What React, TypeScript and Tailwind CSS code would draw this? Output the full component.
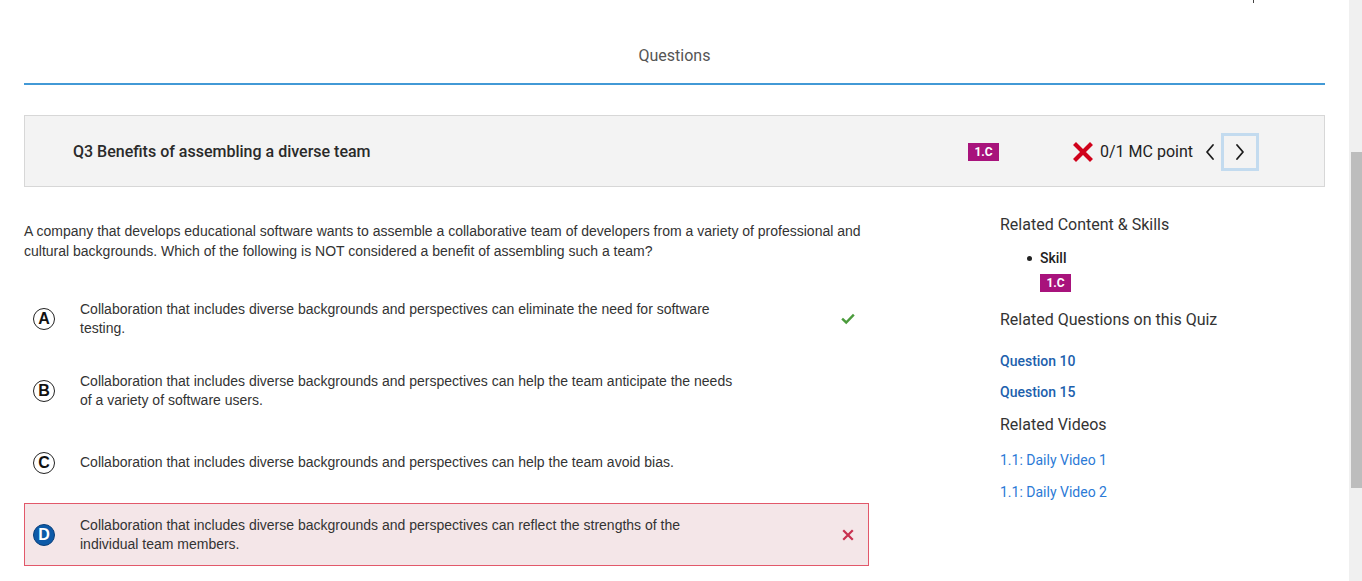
import React from 'react';

const options = [
  {
    letter: 'A',
    text: 'Collaboration that includes diverse backgrounds and perspectives can eliminate the need for software testing.',
    mark: 'correct',
  },
  {
    letter: 'B',
    text: 'Collaboration that includes diverse backgrounds and perspectives can help the team anticipate the needs of a variety of software users.',
    mark: null,
  },
  {
    letter: 'C',
    text: 'Collaboration that includes diverse backgrounds and perspectives can help the team avoid bias.',
    mark: null,
  },
  {
    letter: 'D',
    text: 'Collaboration that includes diverse backgrounds and perspectives can reflect the strengths of the individual team members.',
    mark: 'wrong',
  },
];

function SkillBadge() {
  return (
    <span className="inline-flex h-[18px] w-[31px] items-center justify-center bg-[#a8137c] text-[12px] font-bold leading-none text-white font-['Roboto',sans-serif]">
      1.C
    </span>
  );
}

function Chevron({ dir }: { dir: 'left' | 'right' }) {
  return (
    <svg width="12" height="18" viewBox="0 0 12 18" fill="none" stroke="#1b1b1b" strokeWidth="1.8" strokeLinecap="round" strokeLinejoin="round">
      {dir === 'left' ? <path d="M9 2 L3 9 L9 16" /> : <path d="M3 2 L9 9 L3 16" />}
    </svg>
  );
}

export default function App() {
  return (
    <div className="flex h-[581px] w-[1362px] overflow-hidden bg-white">
      <div className="flex-1 px-6">
        {/* cut-off text from above */}
        <div className="ml-[1229px] h-[3px] w-px bg-[#444]" />

        {/* Tab title */}
        <div className="pt-[43px] text-center font-['Roboto',sans-serif] text-[16px] leading-[20px] text-[#555]">
          Questions
        </div>
        <div className="mt-[17px] h-[2px] bg-[#4299d6]" />

        {/* Question header */}
        <div className="mt-[30px] flex h-[72px] items-center border border-[#d7d7d7] bg-[#f3f3f3] pl-12 pt-[2px] font-['Roboto',sans-serif]">
          <div className="text-[16px] font-medium text-[#2a2a2a]">Q3 Benefits of assembling a diverse team</div>
          <div className="ml-auto flex items-center">
            <SkillBadge />
            <svg className="ml-[74px]" width="20" height="20" viewBox="0 0 20 20" stroke="#d0021b" strokeWidth="4.2" strokeLinecap="square">
              <path d="M3 3 L17 17 M17 3 L3 17" />
            </svg>
            <span className="ml-[7px] text-[16px] text-[#222]">0/1 MC point</span>
            <span className="ml-[11px] flex items-center">
              <Chevron dir="left" />
            </span>
            <span className="ml-[5px] flex h-[38px] w-[38px] items-center justify-center border-[3px] border-[#c3dbef]">
              <Chevron dir="right" />
            </span>
          </div>
          <div className="w-[65px]" />
        </div>

        <div className="flex">
          {/* Left column */}
          <div className="w-[845px]">
            <p className="mt-[34px] font-['Liberation_Sans',Arial,sans-serif] text-[14px] leading-[20px] text-[#333]">
              A company that develops educational software wants to assemble a collaborative team of developers from a variety of professional and cultural backgrounds. Which of the following is NOT considered a benefit of assembling such a team?
            </p>
            <div className="mt-[26px] flex flex-col gap-[9px]">
              {options.map((o) => {
                const wrong = o.mark === 'wrong';
                return (
                  <div
                    key={o.letter}
                    className={
                      'flex h-[63px] items-center ' +
                      (wrong ? 'border border-[#e2586a] bg-[#f4e6e8]' : 'border border-transparent')
                    }
                  >
                    <span
                      className={
                        'ml-[8px] flex h-[22px] w-[22px] items-center justify-center rounded-full font-["Liberation_Sans",Arial,sans-serif] text-[16px] font-bold leading-none ' +
                        (wrong
                          ? 'border-[1.5px] border-[#0a3f7a] bg-[#0d5aa8] text-white'
                          : 'border-[1.5px] border-[#222] text-[#111]')
                      }
                    >
                      {o.letter}
                    </span>
                    <span className="ml-[25px] w-[660px] font-['Liberation_Sans',Arial,sans-serif] text-[14px] leading-[19px] text-[#333]">
                      {o.text}
                    </span>
                    <span className="ml-auto mr-[13px] flex w-[14px] justify-center">
                      {o.mark === 'correct' && (
                        <svg width="14" height="12" viewBox="0 0 14 12" fill="none" stroke="#4b9b3c" strokeWidth="2.4" strokeLinecap="square">
                          <path d="M2 6.5 L5.2 9.5 L12 2.5" />
                        </svg>
                      )}
                      {wrong && (
                        <svg width="12" height="12" viewBox="0 0 12 12" stroke="#c8304f" strokeWidth="2.2" strokeLinecap="square">
                          <path d="M2 2 L10 10 M10 2 L2 10" />
                        </svg>
                      )}
                    </span>
                  </div>
                );
              })}
            </div>
          </div>

          {/* Right column */}
          <div className="ml-[131px] pt-[28px] font-['Roboto',sans-serif]">
            <div className="text-[16px] leading-[20px] text-[#333]">Related Content &amp; Skills</div>
            <ul className="mt-[13px] ml-[27px]">
              <li className="flex items-center text-[14px] font-medium leading-[20px] text-[#222]">
                <span className="mr-[8px] h-[5px] w-[5px] rounded-full bg-[#222]" />
                Skill
              </li>
              <li className="ml-[13px] mt-[6px] flex">
                <SkillBadge />
              </li>
            </ul>
            <div className="mt-[18px] text-[16px] leading-[20px] text-[#333]">Related Questions on this Quiz</div>
            <div className="mt-[21px] text-[14px] font-medium leading-[20px] text-[#1d5fad]">Question 10</div>
            <div className="mt-[11px] text-[14px] font-medium leading-[20px] text-[#1d5fad]">Question 15</div>
            <div className="mt-[13px] text-[16px] leading-[20px] text-[#333]">Related Videos</div>
            <div className="mt-[15px] text-[14px] leading-[20px] text-[#2c7ad6]">1.1: Daily Video 1</div>
            <div className="mt-[12px] text-[14px] leading-[20px] text-[#2c7ad6]">1.1: Daily Video 2</div>
          </div>
        </div>
      </div>

      {/* Scrollbar */}
      <div className="flex w-[13px] flex-col bg-[#f0f0f0] pl-[2px]">
        <div className="mt-[152px] h-[336px] bg-[#bdbdbd]" />
      </div>
    </div>
  );
}
